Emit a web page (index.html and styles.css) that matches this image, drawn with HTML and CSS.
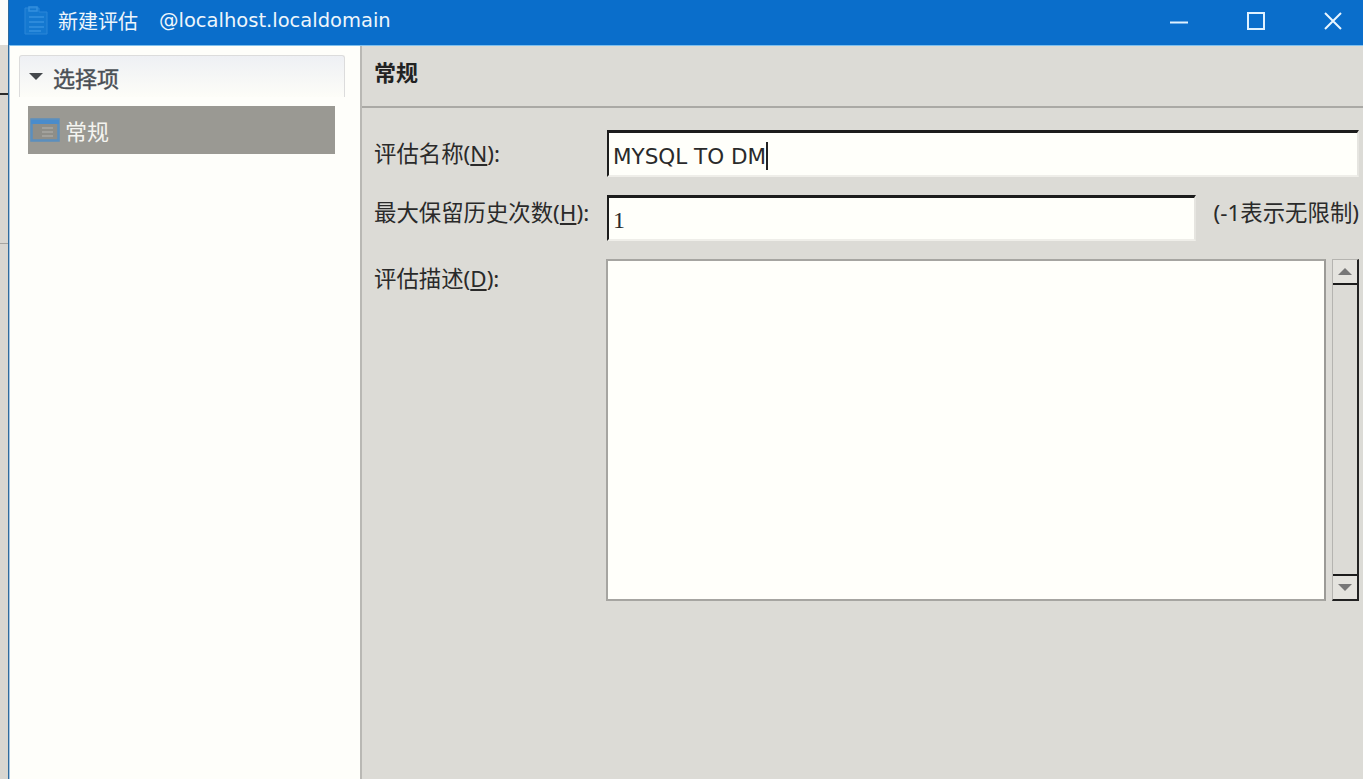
FILE: index.html
```html
<!DOCTYPE html>
<html lang="zh-CN">
<head>
    <meta charset="UTF-8">
    <title>新建评估</title>
    <link rel="stylesheet" href="styles.css">
</head>
<body>
<div class="desk">
    <div class="desk_top"></div>
    <div class="desk_line"></div>
    <div class="desk_rest">
        <div class="desk_tick"></div>
    </div>
</div>
<div class="window">
    <div class="titlebar">
        <svg class="title_icon" width="28" height="30" viewBox="0 0 28 30">
            <path d="M2 2h14v4h8v22H2z" fill="#1478d0" stroke="#2a86d8" stroke-width="1"/>
            <path d="M6 1h8v4H6zM6 11h15M6 16h15M6 21h15M6 25h12" fill="none" stroke="#3490de" stroke-width="1.500"/>
        </svg>
        <span class="title_name">新建评估</span>
        <span class="title_host">@localhost.localdomain</span>
        <div class="title_buttons">
            <svg width="18" height="18" viewBox="0 0 18 18"><path d="M0 10.500h18" stroke="#dff1ff" stroke-width="2"/></svg>
            <svg width="18" height="18" viewBox="0 0 18 18"><path d="M1 1h16v16H1z" fill="none" stroke="#dff1ff" stroke-width="2"/></svg>
            <svg width="18" height="18" viewBox="0 0 18 18"><path d="M1 1l16 16M17 1L1 17" fill="none" stroke="#eaf6ff" stroke-width="2"/></svg>
        </div>
    </div>
    <div class="content">
        <div class="sidebar">
            <div class="side_head">
                <span class="arrow_down"></span>
                <span>选择项</span>
            </div>
            <div class="side_item">
                <svg width="30" height="26" viewBox="0 0 30 26">
                    <path d="M1.500 2.500h27v21h-27z" fill="#8f8e88" stroke="#5b8fbe" stroke-width="2.500"/>
                    <path d="M1 3h28v4H1z" fill="#4a8ccc"/>
                    <path d="M12 11h11M12 15h11M12 19h11" stroke="#a9a8a2" stroke-width="1.500"/>
                </svg>
                <span>常规</span>
            </div>
        </div>
        <div class="main">
            <div class="main_head">常规</div>
            <div class="form">
                <label class="field_label label_name">评估名称(<u>N</u>):</label>
                <div class="input input_wide"><span class="input_text">MYSQL TO DM</span><span class="caret"></span></div>

                <label class="field_label label_count">最大保留历史次数(<u>H</u>):</label>
                <div class="count_row">
                    <div class="input input_count"><span class="input_text">1</span></div>
                    <span class="hint">(-1表示无限制)</span>
                </div>

                <label class="field_label label_desc">评估描述(<u>D</u>):</label>
                <div class="desc_row">
                    <div class="textarea"></div>
                    <div class="scrollbar">
                        <div class="scroll_btn"><span class="arrow_up"></span></div>
                        <div class="scroll_track"></div>
                        <div class="scroll_btn scroll_btn_end"><span class="arrow_small_down"></span></div>
                    </div>
                </div>
            </div>
        </div>
    </div>
</div>
</body>
</html>
```

FILE: styles.css
```css
html, body {
    margin: 0;
    height: 100%;
    overflow: hidden;
}

body {
    display: flex;
    font-family: "DejaVu Sans", "Noto Sans CJK SC", sans-serif;
    color: #2a2a2a;
    background-color: #dcdbd6;
}

.desk {
    width: 8px;
    flex: none;
    display: flex;
    flex-direction: column;
}

.desk_top {
    height: 45px;
    background-color: #fdfdfb;
}

.desk_line {
    height: 50px;
    background-color: #dcd9d3;
    border-bottom: 2px solid #2b2b2b;
    box-sizing: border-box;
}

.desk_rest {
    flex: 1;
    background-color: #d8d6d1;
}

.desk_tick {
    height: 1px;
    margin-top: 148px;
    background-color: #a5a4a0;
}

.window {
    flex: 1;
    display: flex;
    flex-direction: column;
    min-width: 0;
    border-left: 1px solid #2f6a9c;
}

.titlebar {
    height: 46px;
    flex: none;
    box-sizing: border-box;
    display: flex;
    align-items: center;
    padding: 0 21px 4px 14px;
    background-color: #0a6ecb;
    border-bottom: 1px solid #7fc0ee;
    color: #eef6fc;
    font-size: 20px;
}

.title_icon {
    flex: none;
    margin-right: 7px;
}

.title_host {
    margin-left: 21px;
    font-size: 19.500px;
}

.title_buttons {
    margin-left: auto;
    display: flex;
    gap: 59px;
}

.content {
    flex: 1;
    display: flex;
    min-height: 0;
}

.sidebar {
    width: 353px;
    flex: none;
    box-sizing: border-box;
    padding: 9px 0 0 9px;
    background-color: #fefefa;
    border-left: 1px solid #a8c6e2;
    border-right: 2px solid #b9b8b4;
}

.side_head {
    width: 326px;
    height: 42px;
    box-sizing: border-box;
    display: flex;
    align-items: center;
    gap: 10px;
    padding-left: 9px;
    border: 1px solid #dcdcdc;
    border-bottom: none;
    border-radius: 3px 3px 0 0;
    background: linear-gradient(#eef0f4, #fdfdf8);
    color: #4a4f55;
    font-size: 22px;
    -webkit-text-stroke: 0.4px #4a4f55;
}

.arrow_down {
    width: 0;
    height: 0;
    border-left: 7px solid transparent;
    border-right: 7px solid transparent;
    border-top: 7px solid #44484c;
}

.side_item {
    width: 307px;
    height: 48px;
    margin: 9px 0 0 9px;
    display: flex;
    align-items: center;
    gap: 5px;
    padding-left: 2px;
    box-sizing: border-box;
    background-color: #9a9993;
    color: #f4f4f0;
    font-size: 22px;
}

.main {
    flex: 1;
    display: flex;
    flex-direction: column;
    min-width: 0;
}

.main_head {
    height: 62px;
    flex: none;
    box-sizing: border-box;
    padding: 9px 0 0 12px;
    border-bottom: 2px solid #aaa9a5;
    font-size: 22px;
    font-weight: 700;
    color: #222;
}

.form {
    display: grid;
    grid-template-columns: 233px 1fr;
    grid-template-rows: 47px 46px 342px;
    row-gap: 18px;
    padding: 22px 4px 0 12px;
}

.field_label {
    font-size: 22.400px;
    font-family: "Noto Sans", "Noto Sans CJK SC", sans-serif;
    white-space: nowrap;
}

.label_name {
    padding-top: 6px;
}

.label_desc {
    padding-top: 2px;
}

.input {
    box-sizing: border-box;
    display: flex;
    align-items: center;
    padding: 4px 0 0 4px;
    background-color: #fffffa;
    border-top: 3px solid #1c1c1c;
    border-left: 2px solid #1c1c1c;
    border-right: 2px solid #e6e5e0;
    border-bottom: 2px solid #efeee9;
    font-size: 21.500px;
}

.input_wide {
    height: 47px;
}

.input_text {
    white-space: nowrap;
}

.caret {
    width: 2px;
    height: 28px;
    background-color: #222;
}

.count_row {
    display: flex;
    justify-content: space-between;
    align-items: flex-start;
}

.input_count {
    width: 589px;
    height: 46px;
    font-family: "Liberation Serif", serif;
    font-size: 24px;
}

.hint {
    font-size: 22.400px;
    font-family: "Noto Sans", "Noto Sans CJK SC", sans-serif;
    white-space: nowrap;
}

.desc_row {
    display: flex;
    justify-content: space-between;
    margin-left: -1px;
}

.textarea {
    width: 720px;
    box-sizing: border-box;
    background-color: #fffffa;
    border: 2px solid #a6a5a1;
    border-right-color: #9c9b97;
}

.scrollbar {
    width: 27px;
    box-sizing: border-box;
    display: flex;
    flex-direction: column;
    background-color: #dcdbd6;
    border: 1px solid #b5b4b0;
    border-right: 2px solid #222;
    border-bottom: 2px solid #222;
}

.scroll_btn {
    height: 23px;
    flex: none;
    display: flex;
    align-items: center;
    justify-content: center;
    background-color: #e4e3de;
    border-bottom: 2px solid #1c1c1c;
}

.scroll_btn_end {
    border-bottom: none;
    border-top: 2px solid #1c1c1c;
}

.scroll_track {
    flex: 1;
}

.arrow_up {
    width: 0;
    height: 0;
    border-left: 7px solid transparent;
    border-right: 7px solid transparent;
    border-bottom: 7px solid #777;
}

.arrow_small_down {
    width: 0;
    height: 0;
    border-left: 7px solid transparent;
    border-right: 7px solid transparent;
    border-top: 7px solid #777;
}
```
